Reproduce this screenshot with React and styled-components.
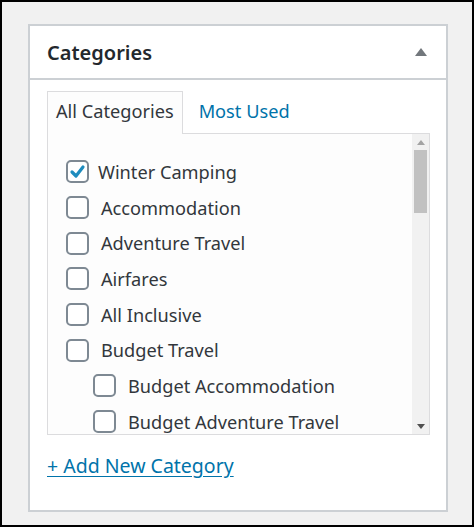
import styled, { createGlobalStyle } from "styled-components";

const GlobalStyle = createGlobalStyle`
  html, body {
    margin: 0;
    padding: 0;
  }
  body {
    font-family: "Noto Sans", "Open Sans", sans-serif;
    color: #32373c;
  }
`;

const Frame = styled.div`
  box-sizing: border-box;
  width: 474px;
  height: 527px;
  border: 2px solid #000;
  background: #f1f1f1;
  padding: 22px 26px 0 26px;
`;

const Panel = styled.div`
  box-sizing: border-box;
  width: 420px;
  height: 488px;
  background: #fff;
  border: 2px solid #ccd0d4;
  display: flex;
  flex-direction: column;
`;

const Header = styled.div`
  display: flex;
  align-items: center;
  justify-content: space-between;
  height: 52px;
  padding: 0 19px 0 17px;
  border-bottom: 2px solid #ccd0d4;
`;

const Title = styled.h2`
  margin: 0;
  font-size: 20px;
  font-weight: 600;
  color: #23282d;
`;

const Toggle = styled.svg`
  width: 12px;
  height: 8px;
  fill: #72777c;
`;

const Body = styled.div`
  padding: 11px 16px 0 17px;
`;

const Tabs = styled.div`
  display: flex;
  align-items: flex-end;
  position: relative;
  z-index: 1;
  margin-bottom: -1px;
`;

const Tab = styled.div`
  box-sizing: border-box;
  height: 43px;
  display: flex;
  align-items: center;
  padding: 0 8px 4px;
  margin-right: 7px;
  font-size: 18.2px;
  color: ${(p) => (p.$active ? "#32373c" : "#0073aa")};
  border: 1px solid ${(p) => (p.$active ? "#dcdcde" : "transparent")};
  border-bottom: none;
  background: ${(p) => (p.$active ? "#fdfdfd" : "transparent")};
`;

const ListBox = styled.div`
  box-sizing: border-box;
  height: 302px;
  border: 1px solid #dcdcde;
  background: #fdfdfd;
  display: flex;
  overflow: hidden;
`;

const List = styled.ul`
  flex: 1;
  margin: 0;
  padding: 20px 0 0 18px;
  list-style: none;
  overflow: hidden;
`;

const Item = styled.li`
  display: flex;
  align-items: center;
  height: 35.7px;
  padding-left: ${(p) => p.$depth * 27}px;
  font-size: 18.2px;
  white-space: nowrap;
`;

const Box = styled.span`
  box-sizing: border-box;
  flex: none;
  width: 23px;
  height: 23px;
  border: 2px solid #7e8993;
  border-radius: 5px;
  background: #fff;
  display: flex;
  align-items: center;
  justify-content: center;
  margin-right: ${(p) => (p.$checked ? 9 : 12)}px;
`;

const Check = styled.svg`
  width: 17px;
  height: 17px;
  fill: none;
  stroke: #1e8cbe;
  stroke-width: 3.2;
  stroke-linecap: round;
  stroke-linejoin: round;
`;

const Scrollbar = styled.div`
  flex: none;
  width: 17px;
  background: #f1f1f1;
  display: flex;
  flex-direction: column;
  align-items: center;
`;

const Arrow = styled.svg`
  width: 8px;
  height: 5px;
  fill: ${(p) => (p.$dark ? "#505050" : "#a3a3a3")};
  margin: 6px 0 5px;
`;

const Thumb = styled.div`
  width: 13px;
  height: 63px;
  background: #c1c1c1;
`;

const Spacer = styled.div`
  flex: 1;
`;

const AddLink = styled.a`
  display: inline-block;
  margin-top: 17px;
  font-size: 19.5px;
  color: #0073aa;
  text-decoration: underline;
  text-underline-offset: 3px;
`;

const categories = [
  { name: "Winter Camping", checked: true, depth: 0 },
  { name: "Accommodation", depth: 0 },
  { name: "Adventure Travel", depth: 0 },
  { name: "Airfares", depth: 0 },
  { name: "All Inclusive", depth: 0 },
  { name: "Budget Travel", depth: 0 },
  { name: "Budget Accommodation", depth: 1 },
  { name: "Budget Adventure Travel", depth: 1 },
];

export default function App() {
  return (
    <>
      <GlobalStyle />
      <Frame>
        <Panel>
          <Header>
            <Title>Categories</Title>
            <Toggle viewBox="0 0 12 8">
              <polygon points="6,0 12,8 0,8" />
            </Toggle>
          </Header>
          <Body>
            <Tabs>
              <Tab $active>All Categories</Tab>
              <Tab>Most Used</Tab>
            </Tabs>
            <ListBox>
              <List>
                {categories.map((c) => (
                  <Item key={c.name} $depth={c.depth}>
                    <Box $checked={c.checked}>
                      {c.checked && (
                        <Check viewBox="0 0 17 17">
                          <polyline points="3,9 7,13 14,4" />
                        </Check>
                      )}
                    </Box>
                    {c.name}
                  </Item>
                ))}
              </List>
              <Scrollbar>
                <Arrow viewBox="0 0 8 5">
                  <polygon points="4,0 8,5 0,5" />
                </Arrow>
                <Thumb />
                <Spacer />
                <Arrow viewBox="0 0 8 5" $dark>
                  <polygon points="0,0 8,0 4,5" />
                </Arrow>
              </Scrollbar>
            </ListBox>
            <AddLink href="#">+ Add New Category</AddLink>
          </Body>
        </Panel>
      </Frame>
    </>
  );
}
